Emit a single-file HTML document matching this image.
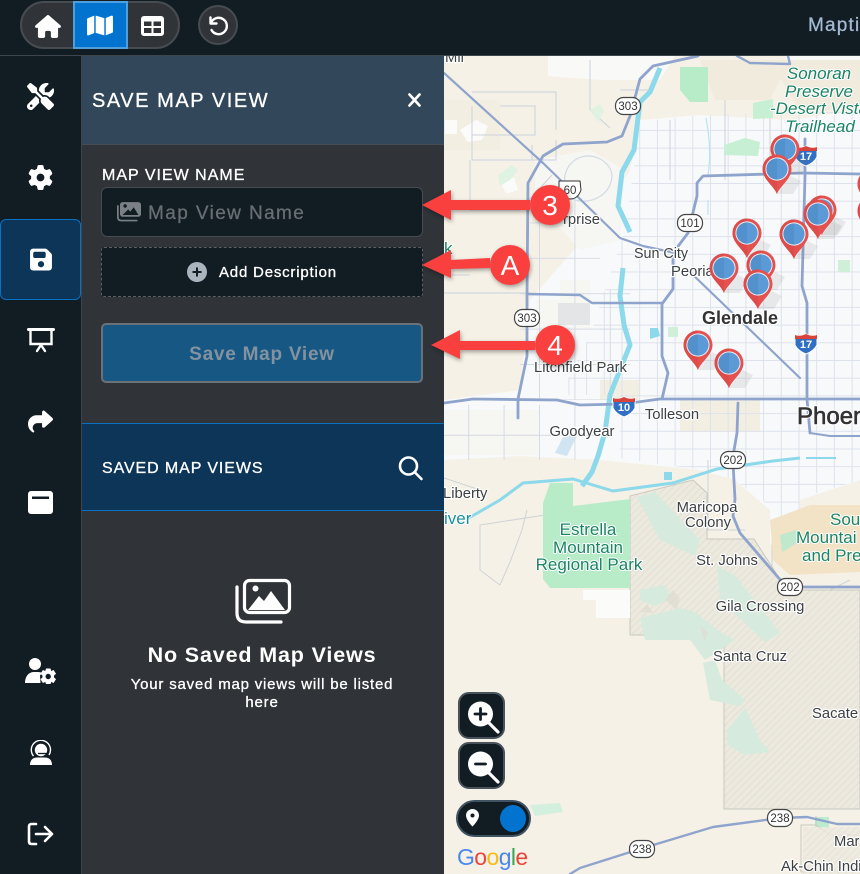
<!DOCTYPE html>
<html lang="en"><head><meta charset="utf-8"><title>Save Map View</title>
<style>
html,body{margin:0;padding:0;background:#111c23}
#p{position:relative;width:860px;height:874px;overflow:hidden;font-family:"Liberation Sans",sans-serif;color:#fff;background:#303438}
.a{position:absolute;box-sizing:border-box;white-space:nowrap}
.ic{position:absolute;fill:#fff;display:block}
.m{-webkit-text-stroke:.3px currentColor}
</style></head><body><div id="p">

<!-- MAP -->
<svg class="a" style="left:444px;top:56px" width="416" height="818" viewBox="444 56 416 818" font-family="'Liberation Sans',sans-serif">
<defs>
<pattern id="g" width="17.7" height="17.7" patternUnits="userSpaceOnUse" x="2" y="6"><path d="M0 .5H17.7M.5 0V17.7" stroke="#dde2ec" stroke-width="1" fill="none"/></pattern>
<pattern id="g2" width="35.4" height="35.4" patternUnits="userSpaceOnUse" x="8" y="10"><path d="M0 .5H35.4M.5 0V35.4" stroke="#d6dbe3" stroke-width="1" fill="none"/></pattern>
<pattern id="h" width="5" height="5" patternUnits="userSpaceOnUse" patternTransform="rotate(-45)"><rect width="5" height="5" fill="#ece9df"/><path d="M0 .5H5" stroke="#e3dfd4" stroke-width="1"/></pattern>
<g id="pin">
<path d="M0 25L14 7L24 12L16 25Z" fill="#777" opacity=".12"/>
<path d="M0 25C-3 17-14.5 10-14.5 0A14.5 14.5 0 1 1 14.5 0C14.5 10 3 17 0 25Z" fill="#e4514f"/>
<path d="M0 25C-3 17-14.500 10-14.500 0A14.500 14.500 0 0 1 0-14.500Z" fill="#dd4b4a"/>
<circle r="11.600" fill="#e7eef4"/><circle r="10.600" fill="#5b9ad6"/>
<path d="M0-10.600A10.600 10.600 0 0 0 0 10.600Z" fill="#5391cd"/>
</g>
<g id="sh"><rect x="-12.500" y="-8.500" width="25" height="17" rx="8" fill="#fff" stroke="#444" stroke-width="1.200"/></g>
<g id="i"><path d="M-11-7Q-6-5 0-8Q6-5 11-7V3Q8 9 0 12Q-8 9-11 3Z" fill="#2f6fc4" stroke="#fff" stroke-width="1"/><path d="M-11-7Q-6-5 0-8Q6-5 11-7V-3H-11Z" fill="#d8433c"/></g>
</defs>
<rect x="444" y="56" width="416" height="818" fill="#f5f1e6"/>

<!-- urban white -->
<path d="M640 120L700 115L790 120L860 110V480L800 500V545H770V510L735 480L700 470L600 460L520 456L444 460V400L520 390L530 300L600 220L630 170Z" fill="#f8f9fa"/>
<path d="M548 56H675L660 80H600L548 76ZM786 56H860V66H786Z" fill="#f9f9f7"/>
<path d="M535 160L590 150L625 170L620 240L580 250L535 200ZM560 280H590V330H560ZM444 410H540V455H444ZM536 300H575V345H536Z" fill="#f6f6f3"/>
<path d="M700 60H790L770 100H715ZM770 60H860V108L800 112Z" fill="#f1ebdd"/>
<path d="M444 100H500V150H444ZM600 380H640V400H600ZM680 400H760V432H680Z" fill="#f3eee2"/>
<path d="M460 130l16-10 12 6-6 14-14 2zM500 180l14-2 4 12-12 4zM445 120h12v14h-12z" fill="#fbfbf9"/>

<!-- grids -->
<path d="M640 122L700 115L860 110V480L800 498V540H775V510L735 480L700 470L620 458L620 395L560 395L590 335L625 230Z" fill="url(#g)"/>
<path d="M444 405H600V460H444ZM520 290H630V400H520ZM530 190H600V290H530Z" fill="url(#g2)"/>
<path d="M472 106V160H556V140M472 135H535V106H500M470 160V210M470 210H520L552 175M556 130V92H472M532 160V145M444 293H530M444 275H470M620 90H650M670 120V180M725 100V180M770 110V160M590 60V110L610 128" fill="none" stroke="#ccd2dc" stroke-width="1"/>
<path d="M560 485L545 515L480 525V570L500 585L510 562L522 530L527 510M480 490L444 478M640 510H700M708 460V530H745M772 520V590M774 535H780M850 580L830 590L780 600" fill="none" stroke="#cfd2d7" stroke-width="1"/>
<path d="M575 160C590 150 610 160 612 175C612 195 590 205 575 200C562 195 560 170 575 160Z" fill="none" stroke="#d3dae3" stroke-width="1.200"/>
<rect x="558" y="303" width="32" height="22" fill="#e4e5e7"/>

<!-- tan mountain / south -->
<path d="M770 520L810 505H860V572L790 575L773 560Z" fill="#f2e3c6"/>
<path d="M780 535l16-5 6 10-20 12z" fill="#bfe8cd"/>

<!-- reservation -->
<path d="M630 496L693 480L707 493V539H754L783 584V590H860V809H724V635H630Z" fill="url(#h)" stroke="#c9c9c0" stroke-width="1"/>
<g fill="#d6ebde">
<path d="M637 497L655 492L700 540L695 556L660 540Z"/>
<path d="M717 566L735 575L780 633L765 642L720 600Z"/>
<path d="M640 590L665 585L672 598L655 606L640 600Z"/>
<path d="M640 618L680 608L695 612L720 632L735 640L705 660L690 640L645 640Z"/>
<path d="M703 663L715 660L722 680L745 700L740 706L710 700Z"/>
<path d="M727 730L745 708L760 740L770 752L745 755L727 745Z"/>
</g>
<path d="M665 600l8-10 7 8-3 12zM640 612l7-8 6 9zM700 625l8 8-4 8z" fill="#dedcd2" opacity=".7"/>
<path d="M583 590H630V618H596V600H583Z" fill="#fbfbf9"/>
<path d="M530 805L560 803L563 812L535 816Z" fill="#cfeedb" opacity=".9"/>
<path d="M815 817h14v10h-14z" fill="#bdebcf"/>
<path d="M801 872V825H816V816M816 825L830 835H860M801 872H850" fill="none" stroke="#c9c9c0" stroke-width="1"/>
<path d="M803 827H860V874H803Z" fill="url(#h)" opacity=".8"/>

<!-- parks -->
<path d="M680 67H708V102H690L680 90Z" fill="#b8ecc8"/>
<path d="M753 103L773 99V118L753 119ZM724 145L745 138L760 142L758 156L724 155Z" fill="#c7efd3"/>
<path d="M543 503L550 483H573V506L630 499V588H550L543 579Z" fill="#b8ecc8"/>
<path d="M668 327h10v10h-10zM838 260h12v12h-12z" fill="#d0efd9"/>
<path d="M498 175l14-10 6 5-8 10-10 6zM590 110l10-6 4 8-6 10z" fill="#ddf3e2" opacity=".9"/>

<!-- water -->
<path d="M660 68L650 92L640 102L634 150L622 172L618 206L630 232" fill="none" stroke="#8bd9ea" stroke-width="5" stroke-linejoin="round"/>
<path d="M623 268L620 296L624 325L630 345L610 395L605 432L598 456L592 472L582 486" fill="none" stroke="#8bd9ea" stroke-width="5" stroke-linejoin="round"/>
<path d="M467 519L500 500L523 483L573 479L613 491L673 483L717 469L773 461L800 458" fill="none" stroke="#8bd9ea" stroke-width="3"/>
<path d="M650 328l8 0 2 8-10 3z" fill="#8bd9ea"/><path d="M565 433l-10 20 12 3 10-20z" fill="#c7def0" opacity=".8"/>
<path d="M706 118Q712 150 708 175M708 200V215" fill="none" stroke="#b6e6f1" stroke-width="1.200"/>
<path d="M664 472h8v8h-8zM806 457h30v2h-30z" fill="#8bd9ea"/>

<!-- freeways -->
<g fill="none" stroke="#8fa4cc" stroke-width="2.800" stroke-linejoin="round" stroke-linecap="round">
<path d="M698 56L653 66L640 79L630 116L622 136L607 142L563 144L543 156L528 183L527 296L527 356L518 399L518 418"/>
<path d="M444 73L543 163L580 199L620 238L643 246L680 254" stroke-width="2.200"/>
<path d="M690 272L800 378" stroke-width="2.200"/>
<path d="M860 174L803 173L703 176L697 183L697 196L688 233L673 253L673 289L662 304L662 356L668 373L662 399"/>
<path d="M527 294L580 295L592 303L662 303" stroke-width="2.400"/>
<path d="M805 139L805 176L802 286L807 303L807 399L810 433"/>
<path d="M444 403L473 399L557 400L580 405L623 404L660 399L860 399"/>
<path d="M737 56L750 63L790 64L788 56" stroke-width="2.400"/>
<path d="M738 403L737 433L733 456L733 463L735 499L733 516L740 533L783 583L803 587L860 587"/>
<path d="M570 874L580 868L640 849L713 827L780 818L807 817L837 824L860 824" stroke-width="2.400"/>
<path d="M810 433L830 436H860" stroke-width="2"/>
</g>

<!-- shields -->
<g font-size="11.5" fill="#333" text-anchor="middle">
<use href="#sh" x="628" y="106"/><text x="628" y="110">303</text>
<use href="#sh" x="527" y="318"/><text x="527" y="322">303</text>
<use href="#sh" x="690" y="223"/><text x="690" y="227">101</text>
<path d="M559 181H580L581 190Q578 199 570 199Q560 198 559 190Z" fill="#fff" stroke="#333"/><text x="570" y="194">60</text>
<use href="#sh" x="733" y="460"/><text x="733" y="464">202</text>
<use href="#sh" x="790" y="587"/><text x="790" y="591">202</text>
<use href="#sh" x="780" y="818"/><text x="780" y="822">238</text>
<use href="#sh" x="642" y="849"/><text x="642" y="853">238</text>
</g>
<g font-size="11" font-weight="bold" fill="#fff" text-anchor="middle">
<use href="#i" x="806" y="154"/><text x="806" y="160">17</text>
<use href="#i" x="806" y="342"/><text x="806" y="348">17</text>
<use href="#i" x="624" y="405"/><text x="624" y="411">10</text>
</g>

<!-- labels -->
<g style="paint-order:stroke" stroke="#fff" stroke-width="2.400" stroke-linejoin="round" fill="#3c4043" font-size="14.800">
<text x="563" y="224">rprise</text>
<text x="661" y="258" text-anchor="middle" font-size="14.300">Sun City</text>
<text x="671" y="276">Peoria</text>
<text x="534" y="372">Litchfield Park</text>
<text x="672" y="419" text-anchor="middle">Tolleson</text>
<text x="582" y="436" text-anchor="middle">Goodyear</text>
<text x="443" y="498">Liberty</text>
<text x="707" y="512" text-anchor="middle">Maricopa</text>
<text x="708" y="527" text-anchor="middle">Colony</text>
<text x="727" y="565" text-anchor="middle">St. Johns</text>
<text x="760" y="611" text-anchor="middle">Gila Crossing</text>
<text x="750" y="661" text-anchor="middle">Santa Cruz</text>
<text x="812" y="718">Sacate</text>
<text x="834" y="846">Mar</text>
<text x="781" y="871">Ak-Chin Indi</text>
<text x="445" y="62">Mii</text>
<text x="740" y="324" text-anchor="middle" font-size="18" font-weight="bold" fill="#333">Glendale</text>
<text x="797" y="424" font-size="24" fill="#333" stroke-width="2.400">Phoen</text>
<text x="797" y="424" font-size="24" fill="#333" stroke="#333" stroke-width=".6" style="paint-order:normal">Phoen</text>
</g>
<g style="paint-order:stroke" stroke="#fff" stroke-width="2" stroke-linejoin="round" fill="#1b8464" font-size="17">
<text x="819" y="79" text-anchor="middle" font-style="italic">Sonoran</text>
<text x="819" y="97" text-anchor="middle" font-style="italic">Preserve</text>
<text x="770" y="114" font-style="italic">-Desert Vista</text>
<text x="820" y="132" text-anchor="middle" font-style="italic">Trailhead</text>
<text x="588" y="535" text-anchor="middle">Estrella</text>
<text x="588" y="553" text-anchor="middle">Mountain</text>
<text x="589" y="570" text-anchor="middle">Regional Park</text>
<text x="830" y="525">Sou</text>
<text x="796" y="543">Mountai</text>
<text x="802" y="561">and Pre</text>
<text x="444" y="524" fill="#1a8f9c">iver</text>
<text x="444" y="254">k</text>
</g>

<!-- pins -->
<use href="#pin" x="872" y="184"/><use href="#pin" x="872" y="211"/>
<use href="#pin" x="785" y="149"/><use href="#pin" x="777" y="169"/>
<use href="#pin" x="822" y="210"/><use href="#pin" x="818" y="214"/>
<use href="#pin" x="794" y="234"/><use href="#pin" x="747" y="233"/>
<use href="#pin" x="761" y="265"/><use href="#pin" x="724" y="268"/>
<use href="#pin" x="758" y="284"/><use href="#pin" x="698" y="345"/>
<use href="#pin" x="729" y="363"/>
</svg>

<!-- TOP BAR -->
<div class="a" style="left:0;top:0;width:860px;height:56px;background:#111c23;border-bottom:1px solid #3d464c"></div>
<div class="a" style="left:20px;top:1px;width:160px;height:48px;border-radius:24px;background:#303438;border:2px solid #474c51"></div>
<div class="a" style="left:73px;top:1px;width:55px;height:48px;background:#0274cf;border:2px solid #4f9fdd"></div>
<svg class="ic" style="left:35px;top:15px" width="26" height="23" viewBox="0 0 576 512"><path d="M575.8 255.5c0 18-15 32.1-32 32.1h-32l.7 160.2c0 2.7-.2 5.4-.5 8.1V472c0 22.1-17.9 40-40 40H456c-1.1 0-2.2 0-3.3-.1c-1.4 .1-2.8 .1-4.2 .1H416 392c-22.1 0-40-17.9-40-40V448 384c0-17.7-14.3-32-32-32H256c-17.7 0-32 14.3-32 32v64 24c0 22.1-17.9 40-40 40H160 128.1c-1.5 0-3-.1-4.5-.2c-1.2 .1-2.4 .2-3.6 .2H104c-22.1 0-40-17.9-40-40V360c0-.9 0-1.9 .1-2.8V287.6H32c-18 0-32-14-32-32.1c0-9 3-17 10-24L266.4 8c7-7 15-8 22-8s15 2 21 7L564.8 231.5c8 7 12 15 11 24z"/></svg>
<svg class="ic" style="left:87px;top:14px" width="26" height="23" viewBox="0 0 576 512"><path d="M384 476.1L192 421.2V35.9L384 90.8V476.1zm32-1.2V88.4L543.1 37.5c15.8-6.3 32.9 5.3 32.9 22.3V394.6c0 9.8-6 18.6-15.1 22.3L416 474.8zM15.1 95.1L160 37.2V423.6L32.9 474.5C17.1 480.8 0 469.2 0 452.2V117.4c0-9.8 6-18.6 15.1-22.3z"/></svg>
<svg class="ic" style="left:141px;top:16px" width="23" height="20" viewBox="0 0 23 20"><path fill-rule="evenodd" d="M3 0H20A3 3 0 0 1 23 3V17A3 3 0 0 1 20 20H3A3 3 0 0 1 0 17V3A3 3 0 0 1 3 0ZM3 5.500V10H10.500V5.500ZM12.500 5.500V10H20V5.500ZM3 12V17H10.500V12ZM12.500 12V17H20V12Z"/></svg>
<div class="a" style="left:198px;top:5px;width:40px;height:40px;border-radius:50%;background:#303438;border:2px solid #474c51"></div>
<svg class="a" style="left:206px;top:15px" width="24" height="21" viewBox="0 0 24 21" fill="none" stroke="#fff" stroke-width="2.400" stroke-linecap="round" stroke-linejoin="round"><path d="M4.500 2.500V8.500H10.500"/><path d="M5 8A8.200 8.200 0 1 1 5.500 15"/></svg>
<div class="a m" style="left:808px;top:15px;font-size:19px;letter-spacing:1.2px;color:#a3bad2">Mapti</div>

<!-- SIDEBAR -->
<div class="a" style="left:0;top:56px;width:82px;height:818px;background:#111c23;border-right:1px solid #3d464c"></div>
<div class="a" style="left:0;top:219px;width:81px;height:81px;background:#0c3557;border:1px solid #0a71c2;border-radius:6px"></div>
<svg class="ic" style="left:27px;top:83px" width="27" height="27" viewBox="0 0 512 512"><path d="M78.6 5C69.1-2.4 55.6-1.5 47 7L7 47c-8.5 8.5-9.4 22-2.1 31.6l80 104c4.5 5.9 11.6 9.4 19 9.4h54.1l109 109c-14.7 29-10 65.4 14.3 89.6l112 112c12.5 12.5 32.8 12.5 45.3 0l64-64c12.5-12.5 12.5-32.8 0-45.3l-112-112c-24.2-24.2-60.6-29-89.6-14.3l-109-109V104c0-7.5-3.5-14.5-9.4-19L78.6 5zM19.9 396.1C7.2 408.8 0 426.1 0 444.1C0 481.6 30.4 512 67.9 512c18 0 35.3-7.2 48-19.9L233.7 374.3c-7.8-20.9-9-43.6-3.6-65.1l-61.7-61.7L19.9 396.1zM512 144c0-10.5-1.1-20.7-3.2-30.5c-2.4-11.2-16.1-14.1-24.2-6l-63.9 63.9c-3 3-7.1 4.7-11.3 4.7H352c-8.8 0-16-7.2-16-16V102.6c0-4.2 1.7-8.3 4.7-11.3l63.9-63.9c8.1-8.1 5.2-21.8-6-24.2C388.7 1.1 378.5 0 368 0C288.5 0 224 64.5 224 144l0 .8 85.3 85.3c36-9.1 75.8 .5 104 28.7L429 274.5c49-23 83-72.8 83-130.5zM56 432a24 24 0 1 1 48 0 24 24 0 1 1 -48 0z"/></svg>
<svg class="ic" style="left:28px;top:165px" width="25" height="25" viewBox="0 0 512 512"><path d="M495.9 166.6c3.2 8.7 .5 18.4-6.4 24.6l-43.3 39.4c1.1 8.3 1.7 16.8 1.7 25.4s-.6 17.1-1.7 25.4l43.3 39.4c6.9 6.2 9.6 15.9 6.4 24.6c-4.4 11.9-9.7 23.3-15.8 34.3l-4.7 8.1c-6.6 11-14 21.4-22.1 31.2c-5.9 7.2-15.7 9.6-24.5 6.8l-55.7-17.7c-13.4 10.3-28.2 18.9-44 25.4l-12.5 57.1c-2 9.1-9 16.3-18.2 17.8c-13.8 2.3-28 3.5-42.5 3.5s-28.7-1.2-42.5-3.5c-9.2-1.5-16.2-8.7-18.2-17.8l-12.5-57.1c-15.8-6.5-30.6-15.1-44-25.4L83.1 425.9c-8.8 2.8-18.6 .3-24.5-6.8c-8.1-9.8-15.5-20.2-22.1-31.2l-4.7-8.1c-6.1-11-11.4-22.4-15.8-34.3c-3.2-8.7-.5-18.4 6.4-24.6l43.3-39.4C64.6 273.1 64 264.6 64 256s.6-17.1 1.7-25.4L22.4 191.2c-6.9-6.2-9.6-15.9-6.4-24.6c4.4-11.9 9.7-23.3 15.8-34.3l4.7-8.1c6.6-11 14-21.4 22.1-31.2c5.9-7.2 15.7-9.6 24.5-6.8l55.7 17.7c13.4-10.3 28.2-18.9 44-25.4l12.5-57.1c2-9.1 9-16.3 18.2-17.8C227.3 1.2 241.5 0 256 0s28.7 1.2 42.5 3.5c9.2 1.5 16.2 8.7 18.2 17.8l12.5 57.1c15.8 6.5 30.6 15.1 44 25.4l55.7-17.7c8.8-2.8 18.6-.3 24.5 6.8c8.1 9.8 15.5 20.2 22.1 31.2l4.7 8.1c6.1 11 11.4 22.4 15.8 34.3zM256 336a80 80 0 1 0 0-160 80 80 0 1 0 0 160z"/></svg>
<svg class="ic" style="left:30px;top:247px" width="22" height="25" viewBox="0 0 448 512"><path d="M64 32C28.7 32 0 60.7 0 96V416c0 35.3 28.7 64 64 64H384c35.3 0 64-28.7 64-64V173.3c0-17-6.7-33.3-18.7-45.3L352 50.7C340 38.7 323.7 32 306.7 32H64zm0 96c0-17.7 14.3-32 32-32H288c17.7 0 32 14.3 32 32v64c0 17.7-14.3 32-32 32H96c-17.7 0-32-14.3-32-32V128zM224 288a64 64 0 1 1 0 128 64 64 0 1 1 0-128z"/></svg>
<svg class="a" style="left:27px;top:327px" width="28" height="27" viewBox="0 0 28 27" fill="none" stroke="#fff" stroke-linecap="round"><path d="M1.500 2.500H26.500" stroke-width="3"/><path d="M3.500 3V17H24.500V3" stroke-width="2.400"/><path d="M14 18L10 24M14 18L18 24" stroke-width="2.400"/></svg>
<svg class="ic" style="left:28px;top:409px" width="25" height="25" viewBox="0 0 512 512"><path d="M307 34.8c-11.5 5.1-19 16.6-19 29.2v64H176C78.8 128 0 206.8 0 304C0 417.3 81.5 467.9 100.2 478.1c2.5 1.4 5.3 1.9 8.1 1.9c10.9 0 19.7-8.9 19.7-19.7c0-7.5-4.3-14.4-9.8-19.5C108.8 431.9 96 414.4 96 384c0-53 43-96 96-96h96v64c0 12.6 7.4 24.1 19 29.2s25 3 34.4-5.4l160-144c6.7-6.1 10.6-14.7 10.6-23.8s-3.8-17.7-10.6-23.8l-160-144c-9.4-8.5-22.9-10.6-34.4-5.4z"/></svg>
<svg class="ic" style="left:28px;top:491px" width="25" height="23" viewBox="0 0 25 23"><path fill-rule="evenodd" d="M3 0H22A3 3 0 0 1 25 3V20A3 3 0 0 1 22 23H3A3 3 0 0 1 0 20V3A3 3 0 0 1 3 0ZM4 5.500V8H21V5.500Z"/></svg>
<svg class="ic" style="left:25px;top:658px" width="32" height="26" viewBox="0 0 32 26"><circle cx="10" cy="6" r="6"/><path d="M0 25C0 18 4 14 9 14H13C15 14 16 14.500 17 15L15 17.500L15.500 25Z"/><path fill-rule="evenodd" d="M21 10.500H25.500L26.200 13L28.600 12L31 15.800L29 17.600V19.400L31 21.200L28.600 25L26.200 24L25.500 26H21L20.300 24L17.900 25L15.500 21.200L17.500 19.400V17.600L15.500 15.800L17.900 12L20.300 13ZM23.200 15.800A2.700 2.700 0 1 0 23.200 21.200A2.700 2.700 0 1 0 23.200 15.800Z"/></svg>
<svg class="ic" style="left:30px;top:740px" width="22" height="25" viewBox="0 0 22 25"><path d="M0 25C0 20 3 17.500 7 17.500H15C19 17.500 22 20 22 25Z"/><circle cx="11" cy="10" r="6.200"/><path d="M3.500 16A9.600 9.600 0 1 1 19 15" fill="none" stroke="#fff" stroke-width="1.400"/><path d="M8 13.500H18" stroke="#111c23" stroke-width="1.300" fill="none"/></svg>
<svg class="a" style="left:27px;top:822px" width="28" height="24" viewBox="0 0 28 24" fill="none" stroke="#fff" stroke-width="2.600" stroke-linecap="round" stroke-linejoin="round"><path d="M9 2H4.500Q2 2 2 4.500V19.500Q2 22 4.500 22H9"/><path d="M9 12H25M18 5L25 12L18 19"/></svg>

<!-- PANEL -->
<div class="a" style="left:82px;top:56px;width:362px;height:818px;background:#303438"></div>
<div class="a" style="left:82px;top:56px;width:362px;height:89px;background:#33475a;border-bottom:1px solid #454c53"></div>
<div class="a m" style="left:92px;top:89px;font-size:20px;line-height:24px;letter-spacing:1.55px">SAVE MAP VIEW</div>
<svg class="a" style="left:407px;top:93px" width="15" height="14" viewBox="0 0 15 14" fill="none" stroke="#fff" stroke-width="2.700" stroke-linecap="round"><path d="M2.500 1.500L12.500 12.500M12.500 1.500L2.500 12.500"/></svg>

<div class="a m" style="left:102px;top:167px;font-size:16px;line-height:18px;letter-spacing:1px">MAP VIEW NAME</div>
<div class="a" style="left:101px;top:187px;width:322px;height:50px;background:#111c23;border:1px solid #474c51;border-radius:6px"></div>
<svg class="a" style="left:117px;top:202px" width="24" height="20" viewBox="0 0 56 46" fill="#7a8085"><path fill-rule="evenodd" d="M13 0H50A6 6 0 0 1 56 6V28A6 6 0 0 1 50 34H13A6 6 0 0 1 7 28V6A6 6 0 0 1 13 0ZM13 30H50L39 12L31 22L26 17ZM19 5A4 4 0 1 0 19 13A4 4 0 1 0 19 5Z"/><path d="M2 9V35Q2 43 10 43H46" fill="none" stroke="#7a8085" stroke-width="4" stroke-linecap="round"/></svg>
<div class="a m" style="left:148px;top:202px;font-size:19px;line-height:23px;letter-spacing:1.4px;color:#686e73;">Map View Name</div>

<div class="a" style="left:101px;top:247px;width:322px;height:50px;background:#111c23;border:1px dashed #5a5f64;border-radius:3px"></div>
<svg class="a" style="left:187px;top:262px" width="20" height="20" viewBox="0 0 20 20"><circle cx="10" cy="10" r="10" fill="#a9b4bf"/><path d="M10 5.500V14.500M5.500 10H14.500" stroke="#111c23" stroke-width="2" /></svg>
<div class="a m" style="left:219px;top:264px;font-size:15px;line-height:18px;letter-spacing:.8px">Add Description</div>

<div class="a" style="left:101px;top:323px;width:322px;height:60px;background:#175784;border:2px solid #6a7278;border-radius:5px"></div>
<div class="a" style="left:101px;top:343px;width:322px;text-align:center;font-size:19px;line-height:24px;letter-spacing:.75px;font-weight:bold;color:#82939f">Save Map View</div>

<div class="a" style="left:82px;top:423px;width:362px;height:88px;background:#0c3557;border-top:1px solid #0a71c2;border-bottom:1px solid #0a71c2"></div>
<div class="a m" style="left:102px;top:459px;font-size:16px;line-height:19px;letter-spacing:.9px">SAVED MAP VIEWS</div>
<svg class="a" style="left:397px;top:455px" width="27" height="27" viewBox="0 0 27 27" fill="none" stroke="#fff" stroke-width="2.600" stroke-linecap="round"><circle cx="11.500" cy="11" r="8.500"/><path d="M18 17.500L24.500 24"/></svg>

<svg class="a" style="left:234px;top:578px" width="58" height="46" viewBox="0 0 58 46"><rect x="10.500" y="2.500" width="45" height="32" rx="5" fill="none" stroke="#fff" stroke-width="3.200"/><path d="M14 32L25 18L30 23L37 13L51 32Z" fill="#fff"/><circle cx="21.500" cy="10.500" r="3" fill="#fff"/><path d="M3 9V35Q3 44 12 44H47" fill="none" stroke="#fff" stroke-width="3.200" stroke-linecap="round"/></svg>
<div class="a" style="left:82px;top:642px;width:360px;text-align:center;font-size:21.5px;line-height:26px;font-weight:bold;letter-spacing:.85px">No Saved Map Views</div>
<div class="a m" style="left:82px;top:676px;width:360px;text-align:center;font-size:15px;line-height:18px;letter-spacing:.8px;white-space:normal">Your saved map views will be listed<br>here</div>

<!-- ARROWS -->
<svg class="a" style="left:0;top:0;filter:drop-shadow(1px 2px 2px rgba(0,0,0,.35))" width="860" height="874" viewBox="0 0 860 874" font-family="'Liberation Sans',sans-serif">
<g fill="#f9403f">
<path d="M422 205L451 190V200H530V210H451V220Z"/><circle cx="550" cy="205" r="20"/>
<path d="M422 265L451 250V260L490 258V268L451 269V278Z"/><circle cx="510" cy="265" r="20"/>
<path d="M431 345L460 330V341H535V350H460V359Z"/><circle cx="555" cy="345" r="20"/>
</g>
<g fill="#fff" font-size="28" text-anchor="middle"><text x="550" y="215">3</text><text x="510" y="275">A</text><text x="555" y="355">4</text></g>
</svg>

<!-- MAP CONTROLS -->
<div class="a" style="left:458px;top:692px;width:47px;height:47px;background:#111c23;border:2px solid #49525a;border-radius:11px"></div>
<div class="a" style="left:458px;top:742px;width:47px;height:47px;background:#111c23;border:2px solid #49525a;border-radius:11px"></div>
<svg class="a" style="left:466px;top:700px" width="34" height="34" viewBox="0 0 34 34"><circle cx="14.500" cy="14" r="12.500" fill="#fff"/><path d="M14.500 8.500V19.500M9 14H20" stroke="#111c23" stroke-width="2.800" stroke-linecap="round"/><path d="M23 23L32 32" stroke="#fff" stroke-width="3.200" stroke-linecap="round"/></svg>
<svg class="a" style="left:466px;top:750px" width="34" height="34" viewBox="0 0 34 34"><circle cx="14.500" cy="14" r="12.500" fill="#fff"/><path d="M9.500 14H19.500" stroke="#111c23" stroke-width="2.800" stroke-linecap="round"/><path d="M23 23L32 32" stroke="#fff" stroke-width="3.200" stroke-linecap="round"/></svg>
<div class="a" style="left:456px;top:800px;width:75px;height:37px;background:#111c23;border:2px solid #3f5261;border-radius:19px"></div>
<svg class="a" style="left:466px;top:809px" width="13" height="18" viewBox="0 0 13 18"><path fill-rule="evenodd" fill="#fff" d="M6.500 0A6.500 6.500 0 0 1 13 6.500C13 10 9 15 6.500 17.500C4 15 0 10 0 6.500A6.500 6.500 0 0 1 6.500 0ZM6.500 4.500A2 2 0 1 0 6.500 8.500A2 2 0 1 0 6.500 4.500Z"/></svg>
<div class="a" style="left:500px;top:805px;width:26px;height:27px;border-radius:50%;background:#0274cf"></div>
<div class="a" style="left:457px;top:843px;font-size:23px;line-height:28px;letter-spacing:-.6px;font-family:'Liberation Sans',sans-serif"><span style="color:#4a87ee">G</span><span style="color:#e8453c">o</span><span style="color:#f7bb15">o</span><span style="color:#4a87ee">g</span><span style="color:#35a853">l</span><span style="color:#e8453c">e</span></div>

</div></body></html>
